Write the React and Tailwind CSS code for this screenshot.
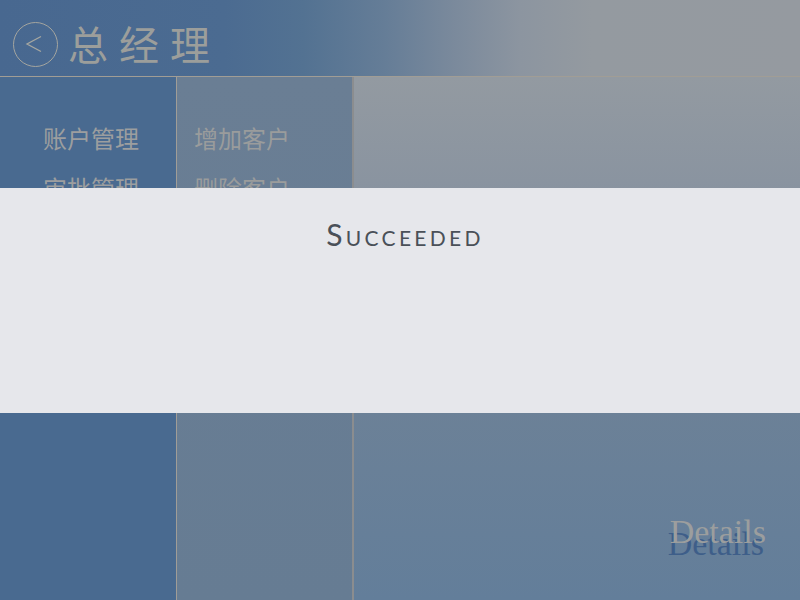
export default function App() {
  const cjk = { fontFamily: '"Noto Sans CJK SC", "Noto Sans", sans-serif' };
  return (
    <div className="relative w-[800px] h-[600px] overflow-hidden flex flex-col bg-[#496a90]">
      <header
        className="h-[77px] shrink-0 flex items-center pl-[13px] border-b border-[#a19d95] bg-[linear-gradient(90deg,#486890_0%,#4b6b91_28%,#537292_38%,#657d97_48%,#7b8a9c_57%,#8c95a0_65%,#949aa0_74%,#959aa0_100%)]"
      >
        <div className="w-[45px] h-[45px] rounded-full border border-[#a4a59f] flex items-center justify-center mt-[12px]">
          <svg width="20" height="22" viewBox="0 0 20 22" fill="none" className="ml-[-3px]">
            <path d="M17 3.5 L3 11 L17 18.5" stroke="#a6a7a1" strokeWidth="1.3" />
          </svg>
        </div>
        <div
          className="ml-[10px] mt-[10px] text-[40px] leading-none tracking-[11px] text-[#9c9e9b]"
          style={cjk}
        >
          总经理
        </div>
      </header>
      <div className="flex flex-1">
        <div className="w-[177px] shrink-0 bg-[#496a90] border-r border-[#a09d97] flex flex-col pl-[43px] pt-[45px] gap-[18px]" style={cjk}>
          <div className="text-[24px] leading-[32px] text-[#9c9e9f]">账户管理</div>
          <div className="text-[24px] leading-[32px] text-[#9c9e9f]">审批管理</div>
        </div>
        <div className="w-[177px] shrink-0 bg-[linear-gradient(180deg,#6a7e94_0%,#667c93_100%)] border-r-2 border-[#8b8d8f] flex flex-col pl-[17px] pt-[45px] gap-[18px]" style={cjk}>
          <div className="text-[24px] leading-[32px] text-[#9a9c9c]">增加客户</div>
          <div className="text-[24px] leading-[32px] text-[#9a9c9c]">删除客户</div>
        </div>
        <div className="relative flex-1 bg-[linear-gradient(180deg,#939aa1_0%,#8a94a0_20%,#6f8296_50%,#637e9a_100%)] flex items-end justify-end pr-[34px] pb-[50px]">
          <div className="relative" style={{ fontFamily: '"Liberation Serif", serif' }}>
            <span className="absolute left-[-2px] top-[12px] text-[34px] leading-none text-[#3e5e89]">Details</span>
            <span className="relative text-[34px] leading-none text-[#9c9e9e]">Details</span>
          </div>
        </div>
      </div>
      <div className="absolute left-0 right-0 top-[188px] h-[225px] bg-[#e6e7eb] flex justify-center pt-[31px]">
        <div
          className="text-[30px] leading-none text-[#4a5058] tracking-[3.3px] pl-[10px]"
          style={{ fontFamily: '"Lato", "DejaVu Sans", sans-serif', fontVariant: 'small-caps' }}
        >
          Succeeded
        </div>
      </div>
    </div>
  );
}
